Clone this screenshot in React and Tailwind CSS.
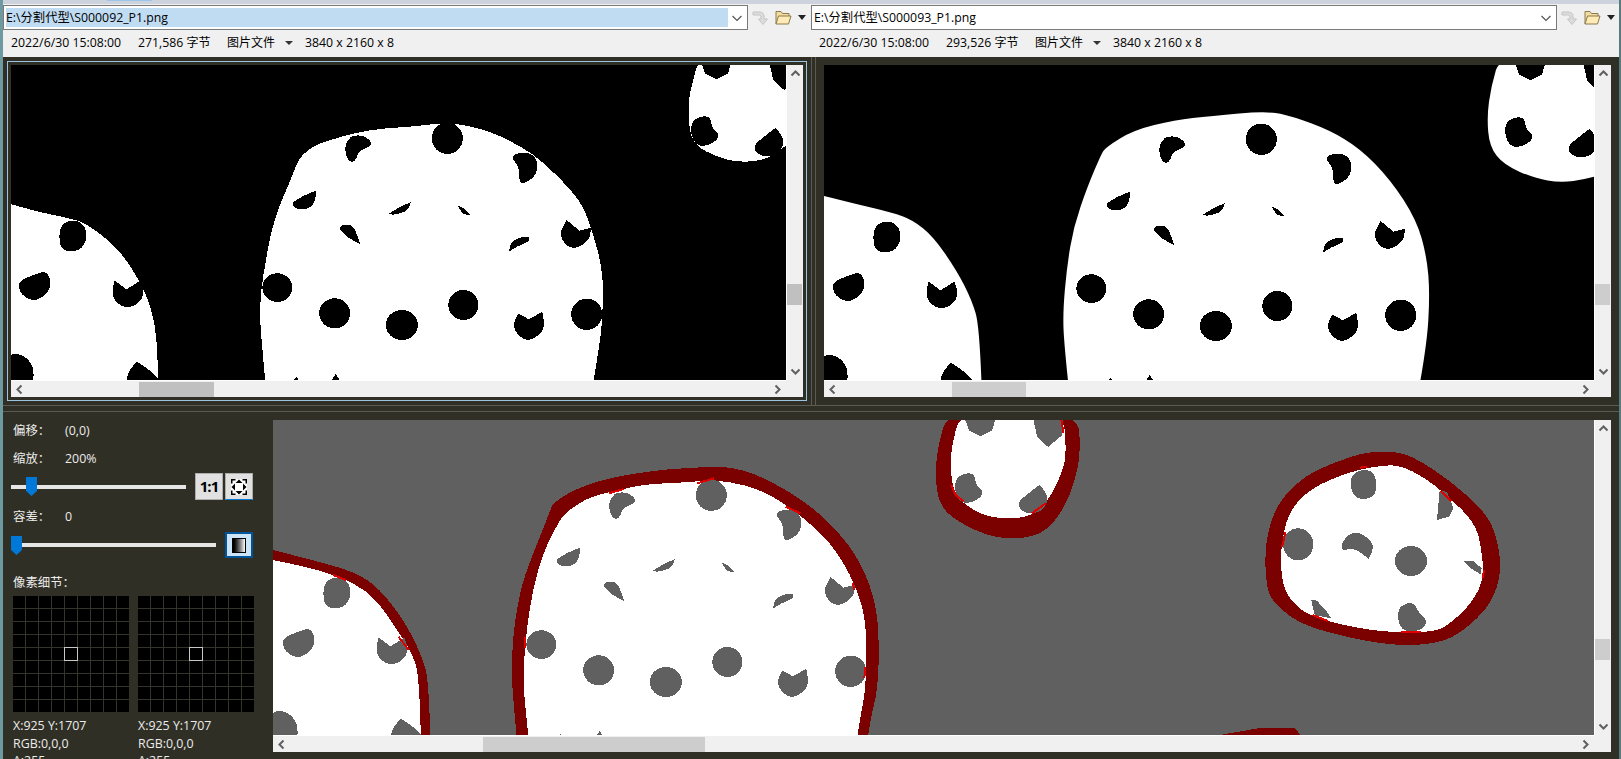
import React from "react";

// pointlists were read off the zoomed reference, so each group carries its own scale
// a point listed twice stays a hard corner in smooth()
function smooth(pts) {
  const mid = (a, b) => [(a[0] + b[0]) / 2, (a[1] + b[1]) / 2];
  const start = mid(pts[pts.length - 1], pts[0]);
  let d = `M${start[0]} ${start[1]}`;
  pts.forEach((p, i) => {
    const m = mid(p, pts[(i + 1) % pts.length]);
    d += `Q${p[0]} ${p[1]} ${m[0]} ${m[1]}`;
  });
  return d + "Z";
}
const sharp = (pts) => pts.map((p) => p.join(",")).join(" ");

const roundChips = [
  [[685, 225], [705, 228], [720, 245], [715, 262], [695, 272], [688, 305], [675, 305], [667, 270], [672, 240]],
  [[988, 290], [1010, 275], [1035, 285], [1042, 320], [1035, 350], [1015, 372], [1005, 365], [1005, 320]],
  [[118, 495], [140, 478], [162, 492], [170, 530], [158, 568], [138, 575], [118, 568], [114, 530]],
  [[40, 660], [65, 645], [90, 632], [100, 670], [90, 705], [65, 725], [42, 705], [35, 680]],
  [[10, 882], [45, 882], [68, 925], [60, 1000], [10, 1000]],
  [[1342, 175], [1375, 165], [1378, 205], [1396, 228], [1375, 255], [1350, 260], [1336, 220]],
  [[1460, 255], [1475, 235], [1502, 203], [1502, 203], [1520, 240], [1510, 278], [1485, 293], [1463, 278]],
  [[562, 430], [590, 405], [612, 392], [612, 392], [610, 425], [600, 445], [575, 450]],
  [[752, 462], [752, 462], [775, 440], [795, 427], [795, 427], [790, 452], [765, 465]],
  [[887, 438], [887, 438], [900, 445], [910, 465], [910, 465], [895, 462]],
  [[655, 505], [665, 493], [682, 495], [692, 525], [697, 552], [697, 552], [675, 535]],
  [[985, 575], [985, 575], [990, 545], [1010, 530], [1025, 530], [1025, 545], [1000, 560]],
  [[1083, 520], [1097, 480], [1097, 480], [1122, 512], [1122, 512], [1144, 503], [1144, 503], [1142, 540], [1115, 567], [1095, 557]],
  [[993, 795], [1003, 760], [1003, 760], [1024, 778], [1024, 778], [1050, 755], [1050, 755], [1056, 810], [1025, 845], [1003, 828]],
  [[216, 700], [222, 662], [222, 662], [245, 688], [245, 688], [272, 662], [272, 662], [280, 700], [268, 732], [245, 745], [225, 728]],
  [[245, 940], [265, 905], [265, 905], [290, 930], [312, 965], [312, 965], [245, 1000]],
];
const sharpChips = [
  [[565, 965], [575, 950], [578, 965]],
  [[640, 965], [650, 942], [660, 965]],
  [[1358, 10], [1415, 10], [1410, 40], [1388, 58], [1365, 40]],
  [[1490, 10], [1547, 10], [1545, 55], [1518, 90], [1497, 60]],
];
const ovalChips = [
  [866, 235, 30, 47],
  [537, 683, 29, 43],
  [648, 760, 30, 45],
  [778, 795, 31, 45],
  [897, 735, 29, 45],
  [1136, 763, 30, 47],
];

function Chips({ fill, transform }) {
  return (
    <g fill={fill} transform={transform}>
      {roundChips.map((p, i) => (
        <path key={i} d={smooth(p)} />
      ))}
      {sharpChips.map((p, i) => (
        <polygon key={i} points={sharp(p)} />
      ))}
      {ovalChips.map((o, i) => (
        <ellipse key={i} cx={o[0]} cy={o[1]} rx={o[2]} ry={o[3]} />
      ))}
    </g>
  );
}

const leftCookies = [
  [[524, 1150], [510, 900], [503, 780], [505, 690], [515, 600], [524, 520], [540, 440], [560, 370], [575, 310], [585, 285], [610, 255], [650, 235], [690, 218], [740, 205], [800, 200], [860, 188], [900, 195], [950, 215], [990, 245], [1030, 280], [1060, 320], [1100, 380], [1130, 440], [1150, 530], [1165, 620], [1168, 700], [1165, 800], [1160, 860], [1130, 1150]],
  [[-60, 400], [20, 432], [80, 458], [145, 478], [170, 495], [210, 540], [240, 590], [265, 650], [285, 710], [300, 790], [305, 880], [310, 1150], [-60, 1150]],
  [[1356, -20], [1340, 70], [1332, 130], [1335, 220], [1350, 260], [1380, 285], [1420, 305], [1470, 305], [1510, 275], [1560, 200], [1560, -20]],
];

const rightCookies = [
  [[505, 1150], [485, 860], [482, 760], [490, 620], [503, 500], [530, 380], [556, 285], [565, 262], [620, 210], [700, 180], [770, 168], [880, 153], [930, 170], [1000, 210], [1060, 265], [1120, 360], [1170, 480], [1190, 590], [1196, 700], [1190, 860], [1155, 1150]],
  [[-60, 380], [18, 408], [80, 432], [150, 458], [190, 480], [230, 530], [275, 630], [305, 720], [320, 800], [328, 1150], [-60, 1150]],
  [[1334, -20], [1315, 80], [1307, 170], [1312, 260], [1340, 315], [1400, 355], [1450, 368], [1500, 358], [1560, 330], [1560, -20]],
];

// bottom canvas, left half
const ringA = [
  {
    outer: [[600, 1150], [578, 860], [574, 770], [578, 650], [597, 510], [630, 400], [665, 290], [672, 265], [720, 225], [800, 190], [920, 165], [1010, 158], [1080, 153], [1160, 178], [1280, 265], [1365, 370], [1410, 460], [1438, 560], [1447, 660], [1445, 820], [1425, 920], [1400, 1150]],
    inner: [[630, 1150], [605, 860], [601, 780], [610, 640], [625, 520], [650, 410], [688, 315], [710, 285], [760, 245], [830, 225], [890, 208], [975, 203], [1060, 195], [1130, 210], [1190, 240], [1260, 300], [1330, 380], [1380, 480], [1410, 580], [1418, 680], [1415, 830], [1400, 920], [1375, 1150]],
  },
  {
    outer: [[-30, 395], [7, 405], [100, 435], [200, 470], [260, 520], [320, 620], [360, 720], [378, 800], [384, 1150], [-30, 1150]],
    inner: [[-30, 425], [7, 435], [100, 460], [150, 480], [200, 505], [250, 550], [300, 640], [340, 720], [355, 790], [362, 1150], [-30, 1150]],
  },
];
const sparksA = [
  [[150, 480], [180, 495]],
  [[305, 665], [330, 705]],
  [[1015, 205], [1055, 190]],
  [[805, 235], [840, 222]],
  [[1225, 275], [1260, 295]],
  [[607, 665], [605, 700]],
  [[1385, 505], [1388, 525]],
  [[1415, 755], [1412, 790]],
];

// bottom canvas, right half
const ringB = [
  {
    outer: [[66, -20], [40, 100], [35, 190], [45, 270], [85, 320], [170, 370], [250, 370], [300, 340], [345, 250], [372, 120], [362, -20]],
    inner: [[95, -20], [72, 100], [70, 170], [80, 240], [120, 285], [170, 310], [245, 310], [290, 270], [330, 170], [338, 100], [328, -20]],
  },
  {
    outer: [[1030, 110], [1105, 110], [1150, 135], [1220, 195], [1290, 275], [1320, 330], [1335, 400], [1340, 470], [1320, 560], [1270, 630], [1210, 682], [1110, 694], [1000, 672], [880, 630], [820, 570], [798, 520], [795, 380], [825, 260], [890, 180], [960, 140]],
    inner: [[1070, 150], [1110, 153], [1160, 185], [1220, 245], [1280, 325], [1295, 400], [1300, 490], [1275, 560], [1220, 630], [1180, 652], [1070, 652], [960, 627], [880, 592], [840, 530], [832, 460], [833, 390], [850, 290], [900, 220], [990, 170]],
  },
];
const chipsB = {
  round: [
    [[990, 190], [1015, 162], [1050, 170], [1054, 240], [1020, 256], [997, 240]],
    [[970, 392], [985, 360], [1010, 350], [1035, 370], [1047, 395], [1035, 432], [1035, 432], [1000, 398], [975, 408]],
    [[1100, 580], [1130, 560], [1145, 575], [1150, 595], [1170, 615], [1160, 642], [1130, 652], [1105, 638]],
  ],
  sharp: [
    [[1198, 228], [1215, 230], [1230, 280], [1220, 305], [1192, 315]],
    [[1252, 437], [1275, 437], [1295, 460], [1293, 478], [1270, 460]],
    [[902, 555], [915, 557], [935, 585], [948, 610], [910, 600]],
  ],
  oval: [
    [872, 388, 35, 48],
    [1132, 438, 37, 45],
  ],
};
const sparksB = [
  [[72, 210], [82, 240], [100, 258]],
  [[258, 295], [290, 265]],
  [[326, 15], [331, 55]],
  [[1015, 158], [1030, 155]],
  [[1200, 228], [1225, 258]],
  [[843, 350], [835, 395]],
  [[1300, 465], [1298, 490]],
  [[905, 600], [940, 618]],
  [[1110, 650], [1155, 652]],
];

function Rings({ rings, transform }) {
  return (
    <g transform={transform}>
      {rings.map((r, i) => (
        <path key={i} d={smooth(r.outer)} fill="#7b0000" />
      ))}
      {rings.map((r, i) => (
        <path key={i} d={smooth(r.inner)} fill="#fff" />
      ))}
    </g>
  );
}

function Sparks({ lines, transform }) {
  return (
    <g transform={transform} fill="none" stroke="#e00000">
      {lines.map((l, i) => (
        <polyline key={i} points={sharp(l)} strokeWidth="2" vectorEffect="non-scaling-stroke" />
      ))}
    </g>
  );
}

function LeftImage() {
  const t = "translate(-11 -5) scale(.5165 .3333)";
  return (
    <svg width="775" height="315" shapeRendering="crispEdges" className="block">
      <rect width="775" height="315" fill="#000" />
      <g fill="#fff" transform={t}>
        {leftCookies.map((p, i) => (
          <path key={i} d={smooth(p)} />
        ))}
      </g>
      <Chips fill="#000" transform={t} />
    </svg>
  );
}

function RightImage() {
  return (
    <svg width="770" height="315" className="block">
      <rect width="770" height="315" fill="#000" />
      <g fill="#fff" transform="translate(-9 -5) scale(.5141 .3333)">
        {rightCookies.map((p, i) => (
          <path key={i} d={smooth(p)} />
        ))}
      </g>
      <g shapeRendering="crispEdges">
        <Chips fill="#000" transform="translate(-10 -4) scale(.5165 .3333)" />
      </g>
    </svg>
  );
}

function DiffImage() {
  const tA = "translate(-3 -5) scale(.4209 .3333)";
  const tB = "translate(647 -5) scale(.4337 .3333)";
  return (
    <svg width="1321" height="315" shapeRendering="crispEdges" className="block">
      <rect width="1321" height="315" fill="#606060" />
      <polygon points="690,975 700,958 780,940 865,940 885,975" fill="#7b0000" transform={tB} />
      <Rings rings={ringA} transform={tA} />
      <Rings rings={ringB} transform={tB} />
      <Chips fill="#606060" transform="translate(-9 -3) scale(.5165 .3333)" />
      <g fill="#606060" transform={tB}>
        {chipsB.round.map((p, i) => (
          <path key={i} d={smooth(p)} />
        ))}
        {chipsB.sharp.map((p, i) => (
          <polygon key={i} points={sharp(p)} />
        ))}
        {chipsB.oval.map((o, i) => (
          <ellipse key={i} cx={o[0]} cy={o[1]} rx={o[2]} ry={o[3]} />
        ))}
      </g>
      <Sparks lines={sparksA} transform={tA} />
      <Sparks lines={sparksB} transform={tB} />
    </svg>
  );
}

function Chevron({ dir }) {
  const rotate = { up: 0, right: 90, down: 180, left: 270 }[dir];
  return (
    <svg width="17" height="17" viewBox="0 0 17 17" className="block shrink-0">
      <path
        d="M4.5 10.5 8.5 6.5 12.5 10.5"
        fill="none"
        stroke="#606060"
        strokeWidth="2"
        transform={`rotate(${rotate} 8.5 8.5)`}
      />
    </svg>
  );
}

function Viewer({ width, thumbLeft, thumbWidth, thumbColor, children }) {
  return (
    <div className="grid grid-rows-[315px_17px]" style={{ gridTemplateColumns: `${width}px 17px` }}>
      <div className="overflow-hidden">{children}</div>
      <div className="flex flex-col bg-[#f0f0f0] border-l border-white">
        <Chevron dir="up" />
        <div className={`mt-[202px] h-[21px] w-[15px] ${thumbColor}`} />
        <div className="mt-auto">
          <Chevron dir="down" />
        </div>
      </div>
      <div className="flex items-center bg-[#f0f0f0] border-t border-white">
        <Chevron dir="left" />
        <div className={`h-[15px] ${thumbColor}`} style={{ marginLeft: thumbLeft - 17, width: thumbWidth }} />
        <div className="ml-auto">
          <Chevron dir="right" />
        </div>
      </div>
      <div className="bg-[#f0f0f0]" />
    </div>
  );
}

function PathBar({ value, selected, inputWidth }) {
  return (
    <div className="flex items-center h-[25px]">
      <div
        className="flex items-center h-[25px] bg-white border border-[#7a7a7a] pl-[2px] pr-[1px] shrink-0"
        style={{ width: inputWidth }}
      >
        <div className={`flex-1 h-[19px] leading-[19px] text-[12.3px] text-black ${selected ? "bg-[#c0dcf3]" : ""}`}>
          {value}
        </div>
        <svg width="18" height="18" viewBox="0 0 18 18" className="shrink-0">
          <path d="M4.5 7 9 11.5 13.5 7" fill="none" stroke="#555" strokeWidth="1.2" />
        </svg>
      </div>
      <svg width="16" height="15" viewBox="0 0 16 15" className="ml-[4px] shrink-0">
        <path
          d="M1 2H7C11 2 12 4 12 7V9H15.5L11 14.5 6.5 9H9V7C9 5.5 8 5 6.5 5H1Z"
          fill="#dcdcdc"
          stroke="#c4c4c4"
        />
      </svg>
      <svg width="17" height="15" viewBox="0 0 17 15" className="ml-[7px] shrink-0">
        <path d="M1 14V1.5H6L7.5 3.5H14V6" fill="#f3dca0" stroke="#8c7a4e" />
        <path d="M1 14 3.5 6H16L13.5 14Z" fill="#fdeab5" stroke="#8c7a4e" />
      </svg>
      <svg width="8" height="5" viewBox="0 0 8 5" className="ml-[6px] shrink-0">
        <path d="M0 0H8L4 5Z" fill="#222" />
      </svg>
    </div>
  );
}

function FileStats({ stamp, size, dims }) {
  return (
    <div className="flex items-center h-[20px] mt-[3px] pl-[8px] text-[12.3px] text-black">
      <span className="w-[127px]">{stamp}</span>
      <span className="w-[89px]">
        {size} <span className="text-[12px]">字节</span>
      </span>
      <span className="w-[58px] text-[12px]">图片文件</span>
      <span className="w-[20px]">
        <svg width="8" height="4" viewBox="0 0 8 4" className="block">
          <path d="M0 0H8L4 4Z" fill="#333" />
        </svg>
      </span>
      <span>{dims}</span>
    </div>
  );
}

function Slider({ width, thumbLeft }) {
  return (
    <div className="relative h-[19px] flex items-center" style={{ width }}>
      <div className="w-full h-[4px] bg-[#e6e6e6]" />
      <svg width="11" height="19" viewBox="0 0 11 19" className="absolute top-0" style={{ left: thumbLeft }}>
        <path d="M0 0H11V14L5.5 19 0 14Z" fill="#0078d7" />
      </svg>
    </div>
  );
}

function InfoRow({ label, value }) {
  return (
    <div className="flex items-center h-[18px] pl-[2px]">
      <span className="w-[52px]">{label}</span>
      <span>{value}</span>
    </div>
  );
}

function PixelGrid() {
  return (
    <div className="relative grid grid-cols-[repeat(9,12px)] gap-px w-[116px] bg-[#35342a]">
      {Array.from({ length: 81 }).map((_, i) => (
        <div key={i} className="h-[12px] bg-black" />
      ))}
      <div className="absolute left-[51px] top-[51px] w-[14px] h-[14px] border border-[#c8c8c8]" />
    </div>
  );
}

function ControlPanel() {
  return (
    <div className="w-[270px] shrink-0 pl-[8px] pt-[10px] text-[12.4px] text-[#ececec] overflow-hidden">
      <InfoRow label="偏移：" value="(0,0)" />
      <div className="mt-[10px]">
        <InfoRow label="缩放：" value="200%" />
      </div>
      <div className="flex items-center h-[27px] mt-[5px]">
        <Slider width={175} thumbLeft={15} />
        <button className="flex items-center justify-center w-[28px] h-[27px] ml-[9px] bg-[#e1e1e1] border border-[#adadad] text-[15px] font-bold text-black tracking-[-1px]">
          1:1
        </button>
        <button className="flex items-center justify-center w-[28px] h-[27px] ml-[2px] bg-[#e1e1e1] border border-[#adadad] border-b-[#0078d7]">
          <svg width="16" height="16" viewBox="0 0 16 16">
            <rect width="16" height="16" fill="#fff" />
            <path d="M.75 4.5V.75H4.5M11.5 .75H15.25V4.5M15.25 11.5V15.25H11.5M4.5 15.25H.75V11.5" fill="none" stroke="#000" strokeWidth="1.5" />
            <path d="M8 .5 11.5 4H4.5ZM8 15.5 4.5 12H11.5ZM.5 8 4 4.5V11.5ZM15.5 8 12 11.5V4.5Z" fill="#000" />
          </svg>
        </button>
      </div>
      <div className="mt-[8px]">
        <InfoRow label="容差：" value="0" />
      </div>
      <div className="flex items-center h-[26px] mt-[6px]">
        <Slider width={205} thumbLeft={0} />
        <button className="flex items-center justify-center w-[28px] h-[26px] ml-[9px] bg-[#cce4f7] border-2 border-[#005499]">
          <span className="block w-[14px] h-[15px] border border-black bg-gradient-to-r from-black to-white" />
        </button>
      </div>
      <div className="h-[18px] mt-[16px] pl-[2px] leading-[18px]">像素细节：</div>
      <div className="flex gap-[9px] mt-[4px] pl-[2px]">
        <PixelGrid />
        <PixelGrid />
      </div>
      <div className="grid grid-cols-[125px_125px] mt-[5px] pl-[2px] leading-[18px]">
        <span>X:925 Y:1707</span>
        <span>X:925 Y:1707</span>
        <span>RGB:0,0,0</span>
        <span>RGB:0,0,0</span>
        <span className="-mt-px">A:255</span>
        <span className="-mt-px">A:255</span>
      </div>
    </div>
  );
}

export default function App() {
  return (
    <div className="w-[1621px] h-[759px] overflow-hidden flex flex-col bg-[#302f25] border-l-[3px] border-l-[#6d9aa0] border-r-2 border-r-[#557d7d] font-['Open_Sans','Noto_Sans_CJK_SC',sans-serif]">
      <div className="h-[4px] shrink-0 bg-[#ccd3dc]">
        <div className="ml-[104px] w-[45px] h-px bg-[#9cc5ee]" />
      </div>

      <div className="flex h-[53px] shrink-0 bg-[#f0f0f0] pt-px">
        <div className="w-[808px]">
          <PathBar value="E:\分割代型\S000092_P1.png" selected inputWidth={745} />
          <FileStats stamp="2022/6/30 15:08:00" size="271,586" dims="3840 x 2160 x 8" />
        </div>
        <div>
          <PathBar value="E:\分割代型\S000093_P1.png" inputWidth={746} />
          <FileStats stamp="2022/6/30 15:08:00" size="293,526" dims="3840 x 2160 x 8" />
        </div>
      </div>

      <div className="flex h-[349px] shrink-0 border-b border-[#5c5b50]">
        <div className="w-[809px] border-r border-[#5c5b50] pt-[4px] pl-[4px]">
          <div className="w-[800px] h-[340px] border border-[#9cc4e0] p-[3px]">
            <Viewer width={775} thumbLeft={128} thumbWidth={75} thumbColor="bg-[#c0c0c0]">
              <LeftImage />
            </Viewer>
          </div>
        </div>
        <div className="ml-[3px] border-l border-[#5c5b50] pt-[8px] pl-[8px]">
          <Viewer width={770} thumbLeft={128} thumbWidth={74} thumbColor="bg-[#cdcdcd]">
            <RightImage />
          </Viewer>
        </div>
      </div>

      <div className="flex flex-1 min-h-0 mt-[5px] border-t border-[#5c5b50]">
        <ControlPanel />
        <div className="pt-[8px]">
          <Viewer width={1321} thumbLeft={210} thumbWidth={222} thumbColor="bg-[#cdcdcd]">
            <DiffImage />
          </Viewer>
        </div>
      </div>
    </div>
  );
}
